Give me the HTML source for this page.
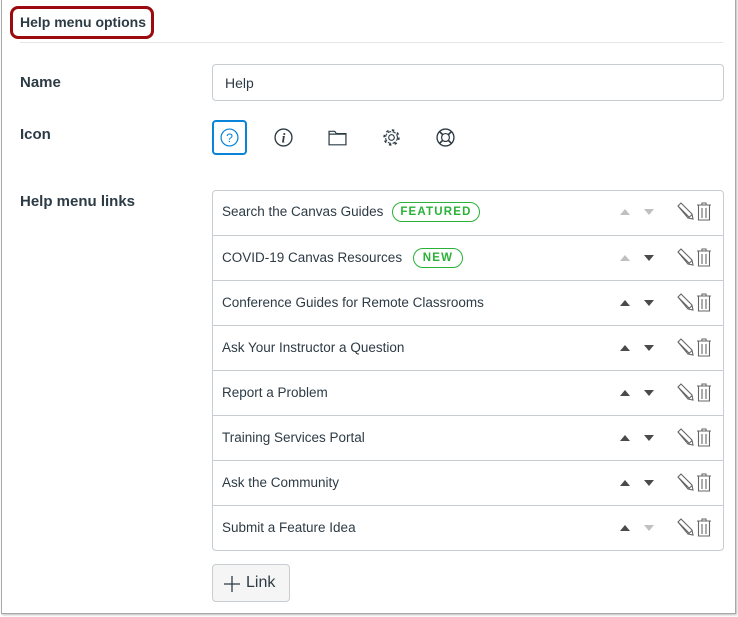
<!DOCTYPE html>
<html><head><meta charset="utf-8"><style>
*{box-sizing:border-box;margin:0;padding:0}
body{width:738px;height:617px;background:#fff;font-family:"Liberation Sans",sans-serif;color:#2d3b45;position:relative;overflow:hidden}
.frame{position:absolute;left:1px;top:-2px;width:735px;height:616px;border:1px solid #a9a9a9;box-shadow:1px 1px 2px #bbb}
.abs{position:absolute}
.lbl{position:absolute;left:20px;font-weight:bold;font-size:15px;color:#2d3b45}
.row{position:absolute;left:212px;width:512px;height:45px;border-top:1px solid #c7cdd1}
.row .t{position:absolute;left:10px;top:14px;font-size:13.5px;color:#2d3b45}
.up,.dn{position:absolute;width:0;height:0;border-left:5px solid transparent;border-right:5px solid transparent}
.up{left:408px;top:19px;border-bottom:6px solid #4a4a4a}
.dn{left:432px;top:19px;border-top:6px solid #4a4a4a}
.lt.up{border-bottom-color:#c0c0c0}.lt.dn{border-top-color:#c0c0c0}
.ic{position:absolute;left:463px;top:11px}
.badge{position:absolute;top:12px;height:20px;border:1.5px solid #2ab238;border-radius:10px;color:#2ab238;font-weight:bold;font-size:11.5px;letter-spacing:1.2px;line-height:18px;text-align:center}
</style></head><body>
<div class="frame"></div>
<div class="abs" style="left:20px;top:42px;width:703px;height:1px;background:#e3e6e8"></div>
<div class="abs" style="left:10px;top:6px;width:144px;height:33px;border:3px solid #9b0a0f;border-radius:8px"></div>
<div class="abs" style="left:20px;top:14px;font-size:14px;font-weight:bold;color:#2d3b45">Help menu options</div>

<div class="lbl" style="top:74px">Name</div>
<div class="abs" style="left:212px;top:64px;width:512px;height:37px;border:1px solid #c7cdd1;border-radius:4px"></div>
<div class="abs" style="left:225px;top:75px;font-size:14px">Help</div>

<div class="lbl" style="top:126px">Icon</div>
<div class="abs" style="left:212px;top:120px;width:35px;height:35px;border:2px solid #0a84d8;border-radius:4px"></div>
<svg class="abs" style="left:216px;top:124px" width="27" height="27" viewBox="0 0 24 24"><circle cx="12" cy="12" r="7.5" fill="none" stroke="#0a84d8" stroke-width="1.1"/><text x="12" y="16" font-size="11" text-anchor="middle" fill="#0a84d8" font-family="Liberation Sans">?</text></svg>
<svg class="abs" style="left:270px;top:124px" width="27" height="27" viewBox="0 0 24 24"><circle cx="12" cy="12" r="7.5" fill="none" stroke="#2d3b45" stroke-width="1.2"/><text x="12" y="16.5" font-size="12" font-style="italic" font-weight="bold" text-anchor="middle" fill="#2d3b45" font-family="Liberation Serif">i</text></svg>
<svg class="abs" style="left:324px;top:124px" width="27" height="27" viewBox="0 0 24 24"><path d="M4.5 6.5h5l1.5 2h8.5v10h-15z M4.5 9h15" fill="none" stroke="#2d3b45" stroke-width="1.1"/></svg>
<svg class="abs" style="left:378px;top:124px" width="27" height="27" viewBox="0 0 24 24"><circle cx="12" cy="12" r="2.5" fill="none" stroke="#2d3b45" stroke-width="1"/><circle cx="12" cy="12" r="5.3" fill="none" stroke="#2d3b45" stroke-width="1" stroke-dasharray="3 1.3"/><circle cx="12" cy="12" r="6.6" fill="none" stroke="#2d3b45" stroke-width="1.4" stroke-dasharray="2.2 3"/></svg>
<svg class="abs" style="left:432px;top:124px" width="27" height="27" viewBox="0 0 24 24"><circle cx="12" cy="12" r="7.5" fill="none" stroke="#2d3b45" stroke-width="1.2"/><circle cx="12" cy="12" r="3.5" fill="none" stroke="#2d3b45" stroke-width="1.1"/><path d="M6.7 6.7l2.8 2.8M17.3 6.7l-2.8 2.8M6.7 17.3l2.8-2.8M17.3 17.3l-2.8-2.8" stroke="#2d3b45" stroke-width="1.5"/></svg>

<div class="lbl" style="top:193px">Help menu links</div>
<div class="abs" style="left:212px;top:190px;width:512px;height:361px;border:1px solid #c7cdd1;border-radius:4px"></div>

<div class="row" style="top:190px;border-top:none"><span class="t">Search the Canvas Guides</span><span class="badge" style="left:180px;width:88px">FEATURED</span><i class="up lt"></i><i class="dn lt"></i>
<svg class="ic" width="40" height="20" viewBox="0 0 40 20"><path d="M3 5l3-3 11 11 1 5-5-1z M3 5l11 11 M6 2l11 11 M13.5 17l3.5-3.5" fill="none" stroke="#666" stroke-width="1.1"/><path d="M22 4h14M27 4V2h4v2M23.5 4v15h11V4M27 7v10M31 7v10" fill="none" stroke="#666" stroke-width="1.1"/></svg></div>
<div class="row" style="top:235px"><span class="t">COVID-19 Canvas Resources</span><span class="badge" style="left:201px;width:50px">NEW</span><i class="up lt"></i><i class="dn"></i>
<svg class="ic" width="40" height="20" viewBox="0 0 40 20"><path d="M3 5l3-3 11 11 1 5-5-1z M3 5l11 11 M6 2l11 11 M13.5 17l3.5-3.5" fill="none" stroke="#666" stroke-width="1.1"/><path d="M22 4h14M27 4V2h4v2M23.5 4v15h11V4M27 7v10M31 7v10" fill="none" stroke="#666" stroke-width="1.1"/></svg></div>
<div class="row" style="top:280px"><span class="t">Conference Guides for Remote Classrooms</span><i class="up"></i><i class="dn"></i>
<svg class="ic" width="40" height="20" viewBox="0 0 40 20"><path d="M3 5l3-3 11 11 1 5-5-1z M3 5l11 11 M6 2l11 11 M13.5 17l3.5-3.5" fill="none" stroke="#666" stroke-width="1.1"/><path d="M22 4h14M27 4V2h4v2M23.5 4v15h11V4M27 7v10M31 7v10" fill="none" stroke="#666" stroke-width="1.1"/></svg></div>
<div class="row" style="top:325px"><span class="t">Ask Your Instructor a Question</span><i class="up"></i><i class="dn"></i>
<svg class="ic" width="40" height="20" viewBox="0 0 40 20"><path d="M3 5l3-3 11 11 1 5-5-1z M3 5l11 11 M6 2l11 11 M13.5 17l3.5-3.5" fill="none" stroke="#666" stroke-width="1.1"/><path d="M22 4h14M27 4V2h4v2M23.5 4v15h11V4M27 7v10M31 7v10" fill="none" stroke="#666" stroke-width="1.1"/></svg></div>
<div class="row" style="top:370px"><span class="t">Report a Problem</span><i class="up"></i><i class="dn"></i>
<svg class="ic" width="40" height="20" viewBox="0 0 40 20"><path d="M3 5l3-3 11 11 1 5-5-1z M3 5l11 11 M6 2l11 11 M13.5 17l3.5-3.5" fill="none" stroke="#666" stroke-width="1.1"/><path d="M22 4h14M27 4V2h4v2M23.5 4v15h11V4M27 7v10M31 7v10" fill="none" stroke="#666" stroke-width="1.1"/></svg></div>
<div class="row" style="top:415px"><span class="t">Training Services Portal</span><i class="up"></i><i class="dn"></i>
<svg class="ic" width="40" height="20" viewBox="0 0 40 20"><path d="M3 5l3-3 11 11 1 5-5-1z M3 5l11 11 M6 2l11 11 M13.5 17l3.5-3.5" fill="none" stroke="#666" stroke-width="1.1"/><path d="M22 4h14M27 4V2h4v2M23.5 4v15h11V4M27 7v10M31 7v10" fill="none" stroke="#666" stroke-width="1.1"/></svg></div>
<div class="row" style="top:460px"><span class="t">Ask the Community</span><i class="up"></i><i class="dn"></i>
<svg class="ic" width="40" height="20" viewBox="0 0 40 20"><path d="M3 5l3-3 11 11 1 5-5-1z M3 5l11 11 M6 2l11 11 M13.5 17l3.5-3.5" fill="none" stroke="#666" stroke-width="1.1"/><path d="M22 4h14M27 4V2h4v2M23.5 4v15h11V4M27 7v10M31 7v10" fill="none" stroke="#666" stroke-width="1.1"/></svg></div>
<div class="row" style="top:505px"><span class="t">Submit a Feature Idea</span><i class="up"></i><i class="dn lt"></i>
<svg class="ic" width="40" height="20" viewBox="0 0 40 20"><path d="M3 5l3-3 11 11 1 5-5-1z M3 5l11 11 M6 2l11 11 M13.5 17l3.5-3.5" fill="none" stroke="#666" stroke-width="1.1"/><path d="M22 4h14M27 4V2h4v2M23.5 4v15h11V4M27 7v10M31 7v10" fill="none" stroke="#666" stroke-width="1.1"/></svg></div>

<div class="abs" style="left:212px;top:564px;width:78px;height:38px;background:#f5f5f5;border:1px solid #c7cdd1;border-radius:4px"></div>
<svg class="abs" style="left:223px;top:575px" width="18" height="18" viewBox="0 0 18 18"><path d="M9 1v16M1 9h16" stroke="#2d3b45" stroke-width="1.3"/></svg>
<div class="abs" style="left:246px;top:574px;font-size:16px;color:#2d3b45">Link</div>
</body></html>
